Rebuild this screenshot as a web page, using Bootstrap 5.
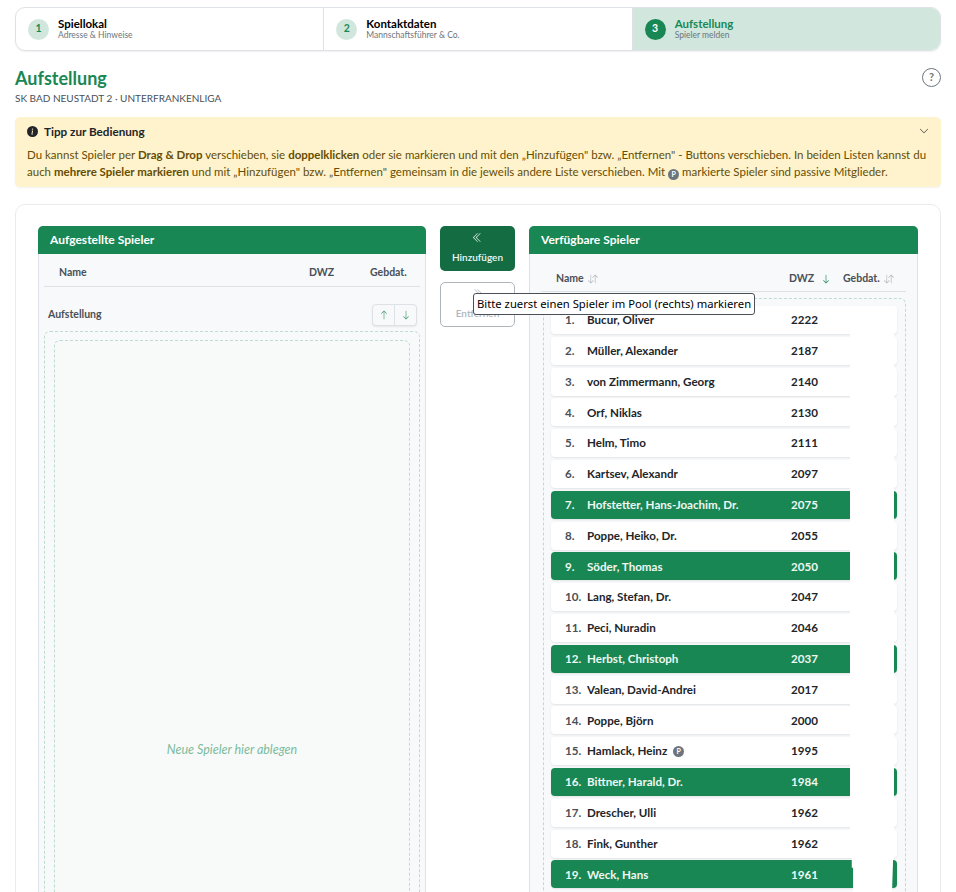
<!DOCTYPE html>
<html lang="de">
  <head>
    <meta charset="UTF-8" />
    <meta name="viewport" content="width=device-width, initial-scale=1.0" />
    <title>Aufstellung</title>
    <link href="https://cdn.jsdelivr.net/npm/bootstrap@5.3.3/dist/css/bootstrap.min.css" rel="stylesheet" crossorigin="anonymous" />
    <style>
      html, body { height: 892px; overflow: hidden; }
      body { font-family: Lato, "Noto Sans", sans-serif; font-size: 12px; color: #212529; background: #fff; }
      .page-wrap { padding: 7px 15px 0; height: 892px; overflow: hidden; }

      .steps { height: 44px; border: 1px solid #dee2e6; border-radius: 10px; overflow: hidden; box-shadow: 0 1px 2px rgba(0,0,0,.06); }
      .step-item { flex: 1 1 0; padding-left: 12px; gap: 9px; border-right: 1px solid #dee2e6; }
      .step-item:last-child { border-right: 0; background: #d1e7dd; }
      .step-num { width: 21px; height: 21px; border-radius: 50%; background: #d1e7dd; color: #198754; font-size: 10.5px; font-weight: 700; }
      .step-item:last-child .step-num { background: #198754; color: #fff; }
      .step-title { font-size: 11.5px; font-weight: 700; line-height: 12px; color: #000; }
      .step-item:last-child .step-title { color: #198754; }
      .step-sub { font-size: 8.5px; line-height: 10px; color: #6c757d; }

      .page-title { font-size: 18px; font-weight: 700; color: #198754; line-height: 22px; margin: 0; }
      .page-sub { font-size: 10px; color: #495057; line-height: 13px; margin-top: 3px; }
      .help-btn { width: 19px; height: 19px; border: 1px solid #6c757d; border-radius: 50%; color: #6c757d; font-size: 11px; font-weight: 700; margin-top: 1px; }

      .tip-box { margin-top: 12px; height: 70px; padding: 7px 12px; background: #fff3cd; color: #664d03; border-radius: 5px; box-shadow: 0 1px 2px rgba(0,0,0,.06); line-height: 17px; font-size: 11.5px; }
      .tip-head { font-size: 11.7px; font-weight: 700; color: #212529; gap: 6px; margin-bottom: 8px; line-height: 14px; }
      .tip-box b { font-weight: 700; }
      .p-mark { width: 11px; height: 11px; border-radius: 50%; background: #6c757d; color: #fff; font-size: 7px; font-weight: 700; vertical-align: -1px; }

      .main-card { margin-top: 17px; padding: 21px 22px; height: 800px; border: 1px solid #e9ecef; border-radius: 10px; gap: 14px; position: relative; }
      .side-panel { flex: 1 1 0; border: 1px solid #dee2e6; border-top: 0; border-radius: 5px 5px 0 0; background: #f8f9fa; }
      .side-panel.is-left { flex: none; width: 388px; }
      .panel-head { height: 28px; margin: 0 -1px; padding-left: 12px; background: #198754; color: #fff; font-weight: 700; font-size: 12px; border-radius: 5px 5px 0 0; }
      .col-heads { font-size: 10.5px; font-weight: 700; color: #495057; height: 33px; padding-top: 6px; margin: 0 5px; border-bottom: 1px solid #dee2e6; }
      .col-heads.is-pool { height: 38px; padding-top: 12px; margin: 0 11px; }
      .sort-icon { width: 10px; height: 10px; fill: #adb5bd; margin-left: 4px; }
      .sort-icon.is-active { fill: #198754; }

      .move-col { width: 75px; flex: none; gap: 11px; }
      .move-btn { height: 45px; border-radius: 5px; font-size: 10px; font-weight: 600; gap: 7px; padding: 0; }
      .move-btn svg { width: 11px; height: 11px; fill: currentColor; }
      .btn-add { background: #146c43; color: #f2f8f5; border: 0; }
      .btn-remove { background: #fff; color: #adb5bd; border: 1px solid #adb5bd; }

      .lineup-row { height: 44px; padding: 12px 8px 0 9px; }
      .lineup-label { font-size: 10.5px; font-weight: 700; color: #495057; }
      .order-btns { width: 45px; height: 22px; background: #f8f9fa; border: 1px solid #dee2e6; border-radius: 4px; box-shadow: 0 1px 2px rgba(0,0,0,.08); }
      .order-btns span { flex: 1 1 0; height: 100%; }
      .order-btns span + span { border-left: 1px solid #dee2e6; }
      .order-btns svg { width: 10px; height: 10px; fill: #3f9c72; }

      .drop-outer { border: 1px dashed #bcdccd; border-radius: 6px; }
      .lineup-drop { margin: 0 5px; }
      .drop-inner { margin: 8px 9px 8px 9px; height: 820px; border: 1px dashed #bcdccd; border-radius: 6px; background: #f8faf9; color: #7dbb9d; font-style: italic; font-size: 12.5px; }

      .pool-list { margin: 6px 11px 0 13px; padding: 7px 8px 8px 7px; height: 640px; position: relative; }
      .player-row { height: 28px; margin-bottom: 2.8px; background: #fff; border-radius: 4px; box-shadow: 0 1px 2px rgba(0,0,0,.09); font-weight: 700; font-size: 11.6px; }
      .player-row .nr { width: 36px; padding-left: 14px; color: #495057; flex: none; }
      .player-row .nm { width: 204px; flex: none; gap: 6px; }
      .player-row.picked { background: #198754; color: #eef7f2; }
      .player-row.picked .nr { color: #eef7f2; }
      /* the birth dates are blanked out in the picture */
      .date-mask { position: absolute; left: 306px; top: 30px; width: 44px; height: 570px; background: #fff; clip-path: polygon(0 0, 100% 0, 100% 93%, 98% 93%, 95% 100%, 7% 100%, 7% 94.5%, 4% 94.5%, 4% 92.5%, 0 92.5%); }

      .hint-tip { position: absolute; left: 457px; top: 88px; height: 22px; padding: 0 3px; background: #fff; border: 1px solid #495057; border-radius: 3px; color: #000; font-family: "Noto Sans", sans-serif; font-size: 11.25px; white-space: nowrap; }
    </style>
  </head>

  <body>
    <div class="page-wrap">
      <div class="steps d-flex">
        <div class="step-item d-flex align-items-center">
          <div class="step-num d-flex align-items-center justify-content-center">1</div>
          <div><div class="step-title">Spiellokal</div><div class="step-sub">Adresse &amp; Hinweise</div></div>
        </div>
        <div class="step-item d-flex align-items-center">
          <div class="step-num d-flex align-items-center justify-content-center">2</div>
          <div><div class="step-title">Kontaktdaten</div><div class="step-sub">Mannschaftsführer &amp; Co.</div></div>
        </div>
        <div class="step-item d-flex align-items-center">
          <div class="step-num d-flex align-items-center justify-content-center">3</div>
          <div><div class="step-title">Aufstellung</div><div class="step-sub">Spieler melden</div></div>
        </div>
      </div>

      <div class="d-flex justify-content-between mt-3">
        <div>
          <h1 class="page-title">Aufstellung</h1>
          <div class="page-sub">SK BAD NEUSTADT 2 · UNTERFRANKENLIGA</div>
        </div>
        <div class="help-btn d-flex align-items-center justify-content-center">?</div>
      </div>

      <div class="tip-box">
        <div class="tip-head d-flex align-items-center">
          <svg width="11" height="11" viewBox="0 0 16 16" fill="#212529"><path d="M8 16A8 8 0 1 0 8 0a8 8 0 0 0 0 16zm.93-9.412-1 4.705c-.07.34.029.533.304.533.194 0 .487-.07.686-.246l-.088.416c-.287.346-.92.598-1.465.598-.703 0-1.002-.422-.808-1.319l.738-3.468c.064-.293.006-.399-.287-.47l-.451-.081.082-.381 2.29-.287zM8 5.5a1 1 0 1 1 0-2 1 1 0 0 1 0 2z"/></svg>
          <span>Tipp zur Bedienung</span>
          <svg class="ms-auto" width="10" height="10" viewBox="0 0 16 16" fill="#212529"><path d="M1.646 4.646a.5.5 0 0 1 .708 0L8 10.293l5.646-5.647a.5.5 0 0 1 .708.708l-6 6a.5.5 0 0 1-.708 0l-6-6a.5.5 0 0 1 0-.708z"/></svg>
        </div>
        <div>Du kannst Spieler per <b>Drag &amp; Drop</b> verschieben, sie <b>doppelklicken</b> oder sie markieren und mit den „Hinzufügen" bzw. „Entfernen" - Buttons verschieben. In beiden Listen kannst du auch <b>mehrere Spieler markieren</b> und mit „Hinzufügen" bzw. „Entfernen" gemeinsam in die jeweils andere Liste verschieben. Mit <span class="p-mark d-inline-flex align-items-center justify-content-center">P</span> markierte Spieler sind passive Mitglieder.</div>
      </div>

      <div class="main-card d-flex">
        <div class="side-panel is-left">
          <div class="panel-head d-flex align-items-center">Aufgestellte Spieler</div>
          <div class="col-heads d-flex align-items-center">
            <span style="width: 265px; padding-left: 15px">Name</span>
            <span style="width: 61px">DWZ</span>
            <span>Gebdat.</span>
          </div>
          <div class="lineup-row d-flex align-items-center justify-content-between">
            <span class="lineup-label">Aufstellung</span>
            <div class="order-btns d-flex">
              <span class="d-flex align-items-center justify-content-center"><svg viewBox="0 0 16 16"><path d="M8 15a.5.5 0 0 0 .5-.5V2.707l3.146 3.147a.5.5 0 0 0 .708-.708l-4-4a.5.5 0 0 0-.708 0l-4 4a.5.5 0 1 0 .708.708L7.5 2.707V14.5a.5.5 0 0 0 .5.5z"/></svg></span>
              <span class="d-flex align-items-center justify-content-center"><svg viewBox="0 0 16 16"><path d="M8 1a.5.5 0 0 1 .5.5v11.793l3.146-3.147a.5.5 0 0 1 .708.708l-4 4a.5.5 0 0 1-.708 0l-4-4a.5.5 0 0 1 .708-.708L7.5 13.293V1.5A.5.5 0 0 1 8 1z"/></svg></span>
            </div>
          </div>
          <div class="drop-outer lineup-drop">
            <div class="drop-inner d-flex align-items-center justify-content-center">Neue Spieler hier ablegen</div>
          </div>
        </div>

        <div class="move-col d-flex flex-column">
          <button class="btn move-btn btn-add d-flex flex-column align-items-center justify-content-center">
            <svg viewBox="0 0 16 16"><path d="M8.354 1.646a.5.5 0 0 1 0 .708L2.707 8l5.647 5.646a.5.5 0 0 1-.708.708l-6-6a.5.5 0 0 1 0-.708l6-6a.5.5 0 0 1 .708 0z"/><path d="M12.354 1.646a.5.5 0 0 1 0 .708L6.707 8l5.647 5.646a.5.5 0 0 1-.708.708l-6-6a.5.5 0 0 1 0-.708l6-6a.5.5 0 0 1 .708 0z"/></svg>
            Hinzufügen
          </button>
          <button class="btn move-btn btn-remove d-flex flex-column align-items-center justify-content-center">
            <svg viewBox="0 0 16 16"><path d="M3.646 1.646a.5.5 0 0 1 .708 0l6 6a.5.5 0 0 1 0 .708l-6 6a.5.5 0 0 1-.708-.708L9.293 8 3.646 2.354a.5.5 0 0 1 0-.708z"/><path d="M7.646 1.646a.5.5 0 0 1 .708 0l6 6a.5.5 0 0 1 0 .708l-6 6a.5.5 0 0 1-.708-.708L13.293 8 7.646 2.354a.5.5 0 0 1 0-.708z"/></svg>
            Entfernen
          </button>
        </div>

        <div class="side-panel">
          <div class="panel-head d-flex align-items-center">Verfügbare Spieler</div>
          <div class="col-heads is-pool d-flex align-items-center">
            <span style="width: 248px; padding-left: 15px">Name<svg class="sort-icon" viewBox="0 0 16 16"><path d="M11.5 15a.5.5 0 0 0 .5-.5V2.707l3.146 3.147a.5.5 0 0 0 .708-.708l-4-4a.5.5 0 0 0-.708 0l-4 4a.5.5 0 1 0 .708.708L11 2.707V14.5a.5.5 0 0 0 .5.5zm-7-14a.5.5 0 0 1 .5.5v11.793l3.146-3.147a.5.5 0 0 1 .708.708l-4 4a.5.5 0 0 1-.708 0l-4-4a.5.5 0 0 1 .708-.708L4 13.293V1.5a.5.5 0 0 1 .5-.5z"/></svg></span>
            <span style="width: 54px">DWZ <svg class="sort-icon is-active" viewBox="0 0 16 16"><path d="M8 1a.5.5 0 0 1 .5.5v11.793l3.146-3.147a.5.5 0 0 1 .708.708l-4 4a.5.5 0 0 1-.708 0l-4-4a.5.5 0 0 1 .708-.708L7.5 13.293V1.5A.5.5 0 0 1 8 1z"/></svg></span>
            <span class="text-nowrap">Gebdat.<svg class="sort-icon" viewBox="0 0 16 16"><path d="M11.5 15a.5.5 0 0 0 .5-.5V2.707l3.146 3.147a.5.5 0 0 0 .708-.708l-4-4a.5.5 0 0 0-.708 0l-4 4a.5.5 0 1 0 .708.708L11 2.707V14.5a.5.5 0 0 0 .5.5zm-7-14a.5.5 0 0 1 .5.5v11.793l3.146-3.147a.5.5 0 0 1 .708.708l-4 4a.5.5 0 0 1-.708 0l-4-4a.5.5 0 0 1 .708-.708L4 13.293V1.5a.5.5 0 0 1 .5-.5z"/></svg></span>
          </div>
          <div class="pool-list drop-outer" id="pool">
            <div class="date-mask"></div>
          </div>
        </div>

        <div class="hint-tip d-flex align-items-center">Bitte zuerst einen Spieler im Pool (rechts) markieren</div>
      </div>
    </div>

    <script src="https://cdn.jsdelivr.net/npm/bootstrap@5.3.3/dist/js/bootstrap.bundle.min.js" crossorigin="anonymous"></script>
    <script>
      const players = [
        ['Bucur, Oliver', 2222],
        ['Müller, Alexander', 2187],
        ['von Zimmermann, Georg', 2140],
        ['Orf, Niklas', 2130],
        ['Helm, Timo', 2111],
        ['Kartsev, Alexandr', 2097],
        ['Hofstetter, Hans-Joachim, Dr.', 2075, 'picked'],
        ['Poppe, Heiko, Dr.', 2055],
        ['Söder, Thomas', 2050, 'picked'],
        ['Lang, Stefan, Dr.', 2047],
        ['Peci, Nuradin', 2046],
        ['Herbst, Christoph', 2037, 'picked'],
        ['Valean, David-Andrei', 2017],
        ['Poppe, Björn', 2000],
        ['Hamlack, Heinz', 1995, 'passive'],
        ['Bittner, Harald, Dr.', 1984, 'picked'],
        ['Drescher, Ulli', 1962],
        ['Fink, Gunther', 1962],
        ['Weck, Hans', 1961, 'picked'],
      ];

      const pool = document.getElementById('pool');
      const mask = pool.querySelector('.date-mask');
      players.forEach((p, i) => {
        const row = document.createElement('div');
        row.className = 'player-row d-flex align-items-center' + (p[2] === 'picked' ? ' picked' : '');
        const badge = p[2] === 'passive'
          ? '<span class="p-mark d-inline-flex align-items-center justify-content-center">P</span>'
          : '';
        row.innerHTML =
          '<span class="nr">' + (i + 1) + '.</span>' +
          '<span class="nm d-flex align-items-center">' + p[0] + badge + '</span>' +
          '<span>' + p[1] + '</span>';
        pool.insertBefore(row, mask);
      });
    </script>
  </body>
</html>
